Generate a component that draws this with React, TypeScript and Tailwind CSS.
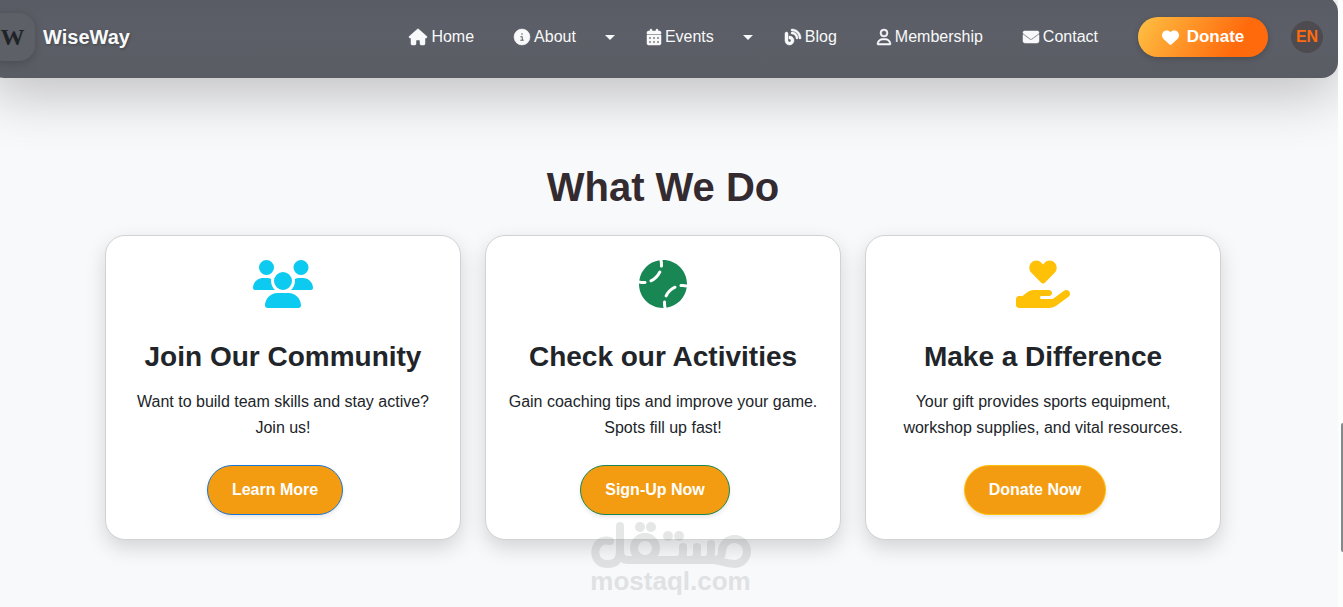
import type { IconType } from "react-icons";
import {
  FaBaseball,
  FaBlog,
  FaCalendarDays,
  FaCircleInfo,
  FaEnvelope,
  FaHandHoldingHeart,
  FaHeart,
  FaHouse,
  FaRegUser,
  FaUsers,
} from "react-icons/fa6";
import { clsx } from "clsx";

interface NavItem {
  label: string;
  icon: IconType;
  iconClass: string;
  dropdown?: boolean;
}

interface Offer {
  title: string;
  text: string;
  action: string;
  icon: IconType;
  iconClass: string;
  borderClass: string;
}

const navItems: NavItem[] = [
  { label: "Home", icon: FaHouse, iconClass: "w-[18px]" },
  { label: "About", icon: FaCircleInfo, iconClass: "w-4", dropdown: true },
  { label: "Events", icon: FaCalendarDays, iconClass: "w-3.5", dropdown: true },
  { label: "Blog", icon: FaBlog, iconClass: "w-4" },
  { label: "Membership", icon: FaRegUser, iconClass: "w-3.5" },
  { label: "Contact", icon: FaEnvelope, iconClass: "w-4" },
];

const offers: Offer[] = [
  {
    title: "Join Our Community",
    text: "Want to build team skills and stay active? Join us!",
    action: "Learn More",
    icon: FaUsers,
    iconClass: "w-15 text-[#0dcaf0]",
    borderClass: "border-[#1b76d6]",
  },
  {
    title: "Check our Activities",
    text: "Gain coaching tips and improve your game. Spots fill up fast!",
    action: "Sign-Up Now",
    icon: FaBaseball,
    iconClass: "w-12 text-[#198754]",
    borderClass: "border-[#198754]",
  },
  {
    title: "Make a Difference",
    text: "Your gift provides sports equipment, workshop supplies, and vital resources.",
    action: "Donate Now",
    icon: FaHandHoldingHeart,
    iconClass: "w-[54px] text-[#ffc107]",
    borderClass: "border-[#ffc107]",
  },
];

const NavLink = ({ label, icon: Icon, iconClass, dropdown }: NavItem) => (
  <li className={clsx("flex items-center", dropdown ? "mr-[31px]" : "mr-10")}>
    <a href="#" className="flex items-center gap-1 text-base text-[#f8f9fa]">
      <Icon className={clsx("h-4 overflow-visible stroke-[16]", iconClass)} />
      {label}
    </a>
    {dropdown && (
      <button type="button" aria-label={`${label} menu`} className="ml-7 flex h-6 w-3 items-center justify-center">
        <span className="border-x-5 border-t-5 border-x-transparent border-t-[#f8f9fa]" />
      </button>
    )}
  </li>
);

const Header = () => (
  <header className="relative z-10 -mt-1 -ml-3 flex h-[82px] items-center rounded-2xl bg-linear-to-b from-[#595c64] via-[#5c5f67] to-[#5a5c64] pr-[15px] shadow-[0_16px_56px_rgba(0,0,0,0.24)]">
    <a href="#" className="flex items-center gap-2 text-xl font-bold text-[#f8f9fa] [text-shadow:1px_1px_3px_rgba(0,0,0,0.3)]">
      <span className="flex h-12 w-[47px] items-center justify-center rounded-2xl bg-[#5d6067] pl-[2px] font-['Liberation_Serif',serif] text-2xl font-bold text-[#202327] shadow-[0_2px_10px_rgba(0,0,0,0.2)] [text-shadow:none]">
        W
      </span>
      WiseWay
    </a>
    <nav className="ml-auto flex items-center">
      <ul className="flex items-center">
        {navItems.map((item) => (
          <NavLink key={item.label} {...item} />
        ))}
      </ul>
      <button
        type="button"
        className="flex h-10 w-[130px] items-center justify-center gap-2 rounded-full bg-linear-[120deg] from-[#ffc143] to-[#ff6a0d] to-75% text-[17px] font-bold text-white shadow-[0_2px_6px_rgba(0,0,0,0.2)]"
      >
        <FaHeart className="size-[17px]" />
        Donate
      </button>
      <button
        type="button"
        className="ml-[23px] flex size-8 items-center justify-center rounded-full bg-[#4d4b4f] text-base font-bold text-[#ff6a0d]"
      >
        EN
      </button>
    </nav>
  </header>
);

const OfferCard = ({ title, text, action, icon: Icon, iconClass, borderClass }: Offer) => (
  <article className="flex flex-col items-center rounded-[20px] border border-[#d0d2d3] bg-white px-5 py-6 text-center text-[#212529] shadow-[0_8px_20px_rgba(0,0,0,0.15)]">
    <Icon className={clsx("h-12", iconClass)} />
    <h3 className="mt-8 mb-[15px] text-[28px] leading-[34px] font-bold">{title}</h3>
    <p className="mb-6 max-w-[310px] text-base leading-[26px]">{text}</p>
    <button
      type="button"
      className={clsx(
        "mr-4 h-[50px] rounded-full border bg-[#f39c12] px-6 text-base font-bold text-white shadow-[0_2px_4px_rgba(0,0,0,0.1)]",
        borderClass,
      )}
    >
      {action}
    </button>
  </article>
);

const Watermark = () => (
  <div className="pointer-events-none absolute inset-x-0 bottom-3 flex flex-col items-center pl-[3px] text-[#8b8f92] opacity-22">
    <svg viewBox="0 0 160 50" className="h-[50px] w-40" fill="none" stroke="currentColor" strokeWidth="8" strokeLinecap="round" strokeLinejoin="round">
      <path d="M19 22C1 18 -1 45 16 45C26 45 29 40 29 31V7V31C29 39 32 41 38 41H122C130 41 133 45 144 45A12.500 12.500 0 1 0 131 32C131 37 130 41 122 41M92 28V34Q92 41 85 41M106 28V34Q106 41 99 41M120 25V34Q120 41 113 41" />
      <circle cx="54" cy="29" r="11" />
      <g fill="currentColor" stroke="none">
        <circle cx="49" cy="8" r="5" />
        <circle cx="60" cy="8" r="5" />
        <circle cx="77" cy="17" r="5" />
        <circle cx="88" cy="17" r="5" />
      </g>
    </svg>
    <span className="mb-[2px] text-[26px] leading-6 font-bold">mostaql.com</span>
  </div>
);

const App = () => {
  return (
    <div className="flex min-h-screen bg-[#fcfdfd] font-['Liberation_Sans',Arial,sans-serif]">
      <div className="relative min-w-0 flex-1 overflow-hidden bg-[#f8f9fb]">
        <Header />
        <main className="-ml-3 px-3 pt-[85px] pb-[67px]">
          <h2 className="mb-6 text-center text-[40px] leading-12 font-bold text-[#332b30]">What We Do</h2>
          <div className="mx-auto grid max-w-[1116px] grid-cols-3 gap-6">
            {offers.map((offer) => (
              <OfferCard key={offer.title} {...offer} />
            ))}
          </div>
        </main>
        <Watermark />
      </div>
      <div className="flex w-[5px] flex-col items-end" aria-hidden="true">
        <div className="mt-[423px] h-[129px] w-[2px] rounded-l-full bg-[#85898c]" />
      </div>
    </div>
  );
};

export default App;
